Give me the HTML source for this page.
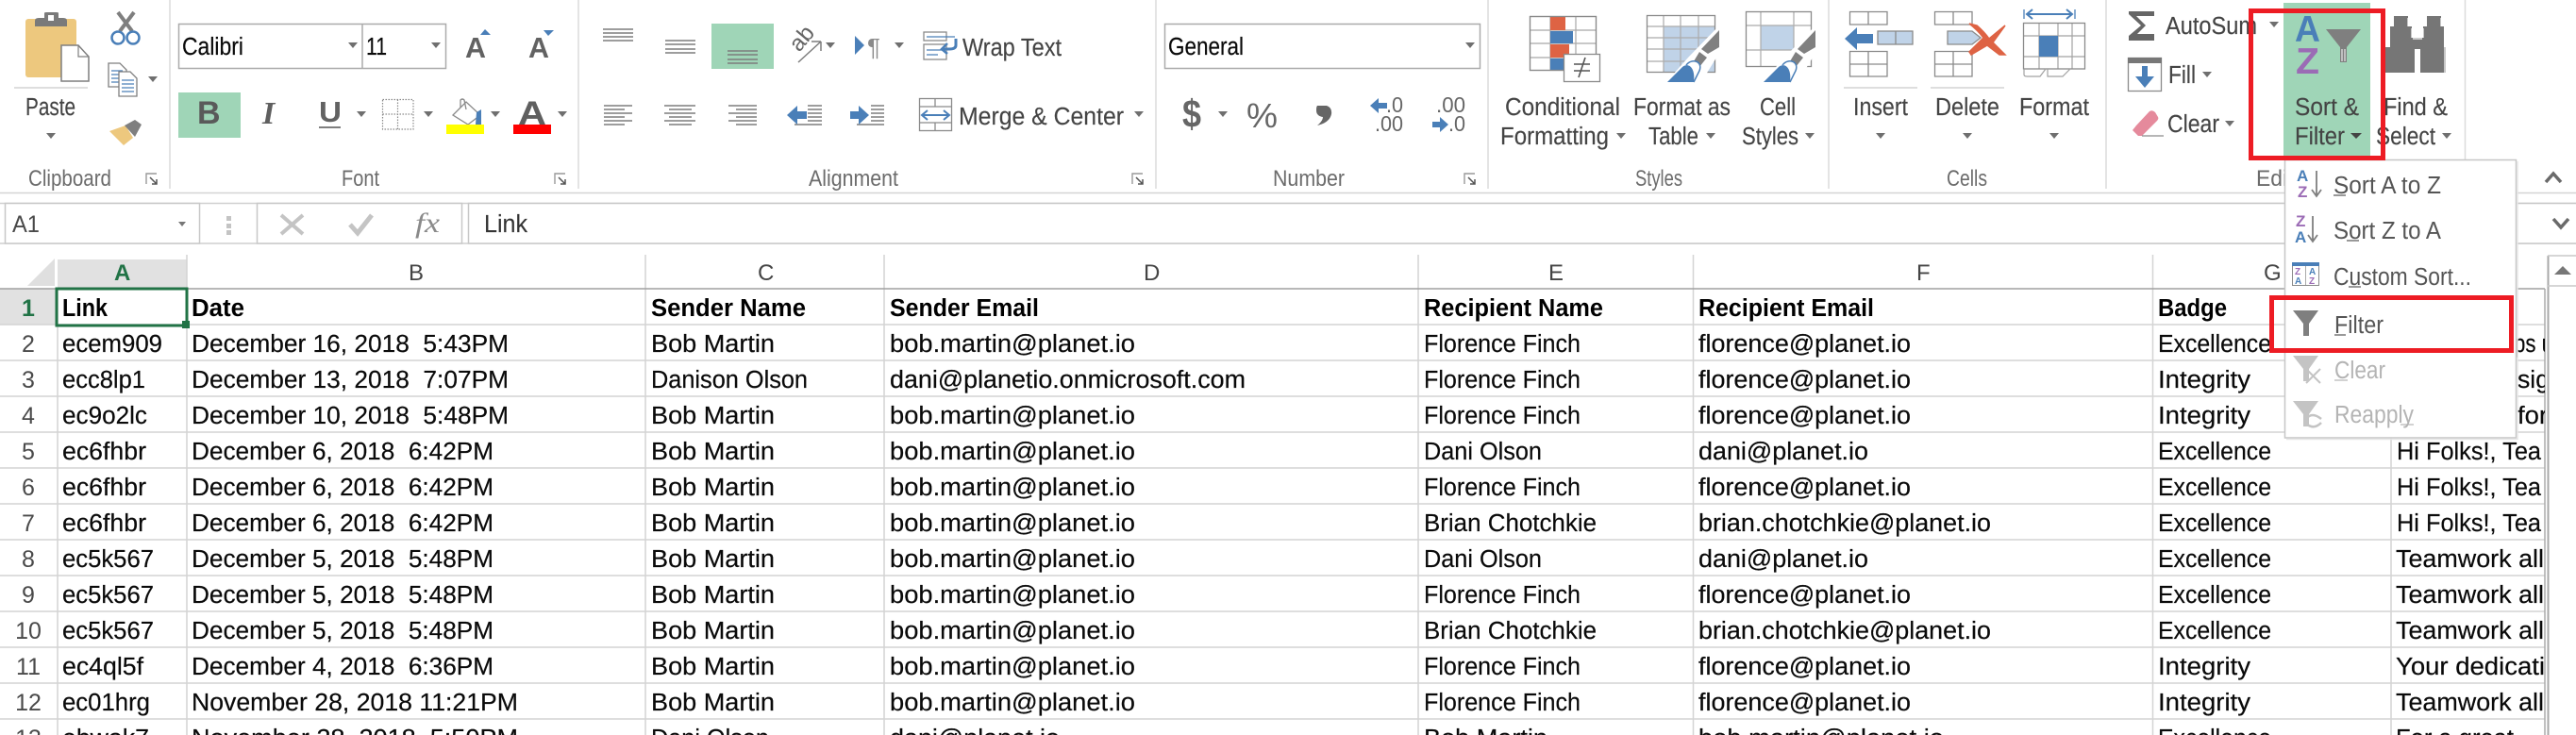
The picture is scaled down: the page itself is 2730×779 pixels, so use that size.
<!DOCTYPE html>
<html><head><meta charset="utf-8"><title>Excel</title>
<style>
html,body{margin:0;padding:0;background:#fff;width:2730px;height:779px;overflow:hidden}
svg{display:block}
text{font-family:"Liberation Sans",Arial,sans-serif;white-space:pre}
.r{font-size:25.500px;fill:#444;stroke:#444;stroke-width:.15px}
.g{font-size:24.500px;fill:#6c6c6c}
.c{font-size:25.500px;fill:#0a0a0a;stroke:#0a0a0a;stroke-width:.2px}
.b{font-size:25.500px;font-weight:bold;fill:#000}
.n{font-size:25px;fill:#4a4a4a}
.m{font-size:25.500px;fill:#555}
.d{font-size:25.500px;fill:#b4b4b4}
</style></head><body>
<svg width="2730" height="779" viewBox="0 0 2730 779" xmlns="http://www.w3.org/2000/svg">
<defs>
<path id="ar" d="M-5 -3H5L0 3Z" fill="#6f6f6f"/>
<g id="lau"><path d="M1 12V1H12" fill="none" stroke="#999" stroke-width="1.4"/><path d="M5 5L12 12M12 7V12H7" fill="none" stroke="#555" stroke-width="1.5"/></g>
<clipPath id="hc"><rect x="2535" y="306" width="162" height="473"/></clipPath>
<g id="brush">
<path d="M-1 60L22 34L57 -2V26L36 60Z" fill="#fff"/>
<path d="M55 5V23L43 30L36 25Z" fill="#808080"/>
<path d="M34 28L42 34L34 44L28 38Z" fill="#808080"/>
<path d="M20 42C26 34 38 38 34 48L28 60" fill="#fff" stroke="#4a7fb8" stroke-width="1.500"/>
<path d="M0 60L16 44C22 39 30 44 28 60Z" fill="#4a7fb8"/>
</g>
</defs>
<rect width="2730" height="779" fill="#fff"/>

<!-- separators -->
<g stroke="#dcdcdc" stroke-width="1.5"><path d="M180 0V200M613 0V200M1225 0V200M1577 0V200M1938 0V200M2232 0V200M2612.500 0V200"/></g>
<path d="M0 204.500H2730" stroke="#d4d4d4" stroke-width="1.5"/>
<path d="M0 215.500H2730M0 258H2730" stroke="#cfcfcf" stroke-width="1.5"/>

<!-- Clipboard -->
<rect x="27" y="20" width="54" height="62" rx="3" fill="#edc87e"/>
<path d="M37 28V22Q37 19 41 19H47V14Q47 13 49 13H60Q62 13 62 14V19H67Q71 19 71 22V28Z" fill="#7a7a7a"/><rect x="51" y="16" width="6" height="6" fill="#fff"/>
<path d="M65 48H83L94 60V86H65Z" fill="#fff" stroke="#7f7f7f" stroke-width="1.5"/><path d="M83 48V60H94" fill="none" stroke="#7f7f7f" stroke-width="1.2"/>
<path d="M15 93H93" stroke="#d4d4d4" stroke-width="1.5"/>
<text class="r" x="27" y="122" textLength="53" lengthAdjust="spacingAndGlyphs">Paste</text>
<use href="#ar" x="54" y="144"/>
<!-- scissors -->
<g fill="none"><path d="M125 13L140 33M142 13L127 33" stroke="#7f7f7f" stroke-width="4"/><circle cx="125" cy="40" r="6.500" stroke="#4a7fb8" stroke-width="2.500"/><circle cx="141" cy="40" r="6.500" stroke="#4a7fb8" stroke-width="2.500"/></g>
<!-- copy -->
<path d="M115 67H127L134 74V92H115Z" fill="#fff" stroke="#7f7f7f" stroke-width="1.300"/><path d="M118 75H130M118 79H130M118 83H130M118 87H130" stroke="#4a7fb8" stroke-width="1.300"/>
<path d="M126 76H138L145 83V102H126Z" fill="#fff" stroke="#7f7f7f" stroke-width="1.300"/><path d="M129 85H142M129 89H142M129 93H142M129 97H142" stroke="#4a7fb8" stroke-width="1.300"/>
<use href="#ar" x="162" y="84"/>
<!-- painter -->
<path d="M116 139L133 133L141 146L131 154Z" fill="#edc87e"/><path d="M132 133L143 127L150 132L143 145Z" fill="#7f7f7f"/>
<text class="g" x="30" y="197" textLength="88" lengthAdjust="spacingAndGlyphs">Clipboard</text>
<use href="#lau" x="154" y="183"/>

<!-- Font group -->
<rect x="189.500" y="25.500" width="283" height="47" fill="#fff" stroke="#ababab" stroke-width="1.500"/><path d="M384 25V72" stroke="#ababab" stroke-width="1.500"/>
<text class="c" x="193" y="58" textLength="65" lengthAdjust="spacingAndGlyphs">Calibri</text><use href="#ar" x="374" y="48"/>
<text class="c" x="388" y="58" textLength="22" lengthAdjust="spacingAndGlyphs">11</text><use href="#ar" x="462" y="48"/>
<text x="493" y="61" font-size="31" font-weight="bold" fill="#626262" textLength="22" lengthAdjust="spacingAndGlyphs">A</text><path d="M509 37L514 31L520 37Z" fill="#4a7fb8"/>
<text x="560" y="61" font-size="31" font-weight="bold" fill="#626262" textLength="22" lengthAdjust="spacingAndGlyphs">A</text><path d="M576 32H587L581 38Z" fill="#4a7fb8"/>
<rect x="189" y="98" width="66" height="48" fill="#9fd5b7"/>
<text x="209" y="131" font-size="34" font-weight="bold" fill="#5a5a5a">B</text>
<text x="278" y="131" font-size="34" font-style="italic" font-weight="bold" fill="#5f5f5f" style="font-family:'Liberation Serif',serif">I</text>
<text x="338" y="129" font-size="31" font-weight="bold" fill="#626262" textLength="24" lengthAdjust="spacingAndGlyphs">U</text><path d="M338 135H361" stroke="#555" stroke-width="1.500"/>
<use href="#ar" x="383" y="121"/>
<path d="M405.500 105.500H438V137H405.500ZM421.500 105.500V137M405.500 121H438" fill="none" stroke="#8a8a8a" stroke-width="1.200" stroke-dasharray="1.500 1.500"/>
<use href="#ar" x="454" y="121"/>
<path d="M480 122L494 108L509 122L496 132Z" fill="#fff" stroke="#8a8a8a" stroke-width="1.300"/><path d="M488 114V106Q490 104 492 106L494 116" fill="none" stroke="#8a8a8a" stroke-width="1.300"/><path d="M505 119L510 116V132H504Z" fill="#4a7fb8"/>
<rect x="473" y="132" width="40" height="10" fill="#ffff00"/><use href="#ar" x="525" y="121"/>
<text x="549" y="132" font-size="35" font-weight="bold" fill="#5f5f5f" textLength="30" lengthAdjust="spacingAndGlyphs">A</text>
<rect x="544" y="132" width="40" height="10" fill="#ff0000"/><use href="#ar" x="596" y="121"/>
<text class="g" x="362" y="197" textLength="40" lengthAdjust="spacingAndGlyphs">Font</text>
<use href="#lau" x="587" y="183"/>

<!-- Alignment -->
<rect x="754" y="25" width="66" height="48" fill="#9fd5b7"/>
<g stroke="#7d7d7d" stroke-width="1.500" fill="none">
<path d="M639 31H671M639 35H671M639 39H671M639 43H671"/>
<path d="M705 43H737M705 47H737M705 52H737M705 56H737"/>
<path d="M771 54H803M771 58H803M771 63H803M771 67H803"/>
<path d="M640 112H670M640 116H662M640 120H670M640 124H662M640 128H670M640 132H662"/>
<path d="M704 112H737M709 116H733M704 120H737M709 124H733M704 128H737M709 132H733"/>
<path d="M772 112H802M780 116H802M772 120H802M780 124H802M772 128H802M780 132H802"/>
<path d="M856 112H871M856 116H871M856 120H871M856 124H871M856 128H871M842 132H871"/>
<path d="M923 112H937M923 116H937M923 120H937M923 124H937M923 128H937M908 132H937"/>
<path d="M846 66L870 44M870 44H860M870 44V54"/>
</g>
<path d="M834 122L845 112V118H855V126H845V132Z" fill="#4a7fb8"/>
<path d="M921 122L910 112V118H901V126H910V132Z" fill="#4a7fb8"/>
<text x="0" y="0" font-size="24" fill="#666" transform="translate(847,56) rotate(-50)" textLength="27" lengthAdjust="spacingAndGlyphs">ab</text>
<use href="#ar" x="880" y="48"/>
<path d="M906 38L916 48L906 58Z" fill="#4a7fb8"/>
<text x="919" y="59" font-size="26" fill="#8a8a8a">¶</text>
<use href="#ar" x="953" y="48"/>
<g fill="none"><rect x="979" y="34" width="24" height="9" stroke="#8a8a8a" stroke-width="1.300"/><rect x="979" y="47" width="24" height="16" stroke="#8a8a8a" stroke-width="1.300"/><path d="M982 39H1012M982 53H1000M982 58H994" stroke="#4a7fb8" stroke-width="1.300"/><path d="M1013 41V48Q1013 52 1006 52H998" stroke="#4a7fb8" stroke-width="3"/><path d="M1004 46L998 52L1004 57" stroke="#4a7fb8" stroke-width="2.500"/></g>
<text class="r" x="1020" y="59" textLength="105" lengthAdjust="spacingAndGlyphs">Wrap Text</text>
<g fill="none"><rect x="974.500" y="104.500" width="34" height="34" stroke="#8a8a8a" stroke-width="1.300"/><path d="M974 113H1009M974 130H1009M991 104V113M991 130V139" stroke="#8a8a8a" stroke-width="1.300"/><path d="M978 122H1005M983 117L977 122L983 127M1000 117L1006 122L1000 127" stroke="#4a7fb8" stroke-width="2"/></g>
<text class="r" x="1016" y="132" textLength="175" lengthAdjust="spacingAndGlyphs">Merge &amp; Center</text>
<use href="#ar" x="1207" y="121"/>
<text class="g" x="857" y="197" textLength="95" lengthAdjust="spacingAndGlyphs">Alignment</text>
<use href="#lau" x="1199" y="183"/>

<!-- Number -->
<rect x="1234.500" y="25.500" width="334" height="47" fill="#fff" stroke="#ababab" stroke-width="1.500"/>
<text class="c" x="1238" y="58" textLength="80" lengthAdjust="spacingAndGlyphs">General</text><use href="#ar" x="1558" y="48"/>
<text x="1253" y="135" font-size="42" font-weight="bold" fill="#666" textLength="20" lengthAdjust="spacingAndGlyphs">$</text><use href="#ar" x="1296" y="121"/>
<text x="1321" y="135" font-size="36" fill="#666" textLength="33" lengthAdjust="spacingAndGlyphs">%</text>
<path d="M1396 112H1406Q1412 114 1411 121Q1409 130 1396 133Q1402 128 1402 124Q1395 123 1395 117Q1395 113 1396 112Z" fill="#666"/>
<path d="M1452 112L1461 104V109H1470V115H1461V120Z" fill="#4a7fb8"/>
<text x="1469" y="119" font-size="23" fill="#666" textLength="18" lengthAdjust="spacingAndGlyphs">.0</text>
<text x="1457" y="139" font-size="23" fill="#666" textLength="30" lengthAdjust="spacingAndGlyphs">.00</text>
<text x="1522" y="119" font-size="23" fill="#666" textLength="31" lengthAdjust="spacingAndGlyphs">.00</text>
<path d="M1535 132L1526 124V129H1518V135H1526V140Z" fill="#4a7fb8"/>
<text x="1535" y="139" font-size="23" fill="#666" textLength="18" lengthAdjust="spacingAndGlyphs">.0</text>
<text class="g" x="1349" y="197" textLength="76" lengthAdjust="spacingAndGlyphs">Number</text>
<use href="#lau" x="1551" y="183"/>

<!-- Styles: conditional -->
<g fill="none" stroke="#a8a8a8" stroke-width="1.200"><rect x="1621.500" y="17.500" width="70" height="57"/><path d="M1643 17V75M1670 17V75M1621 32H1691M1621 46H1691M1621 61H1691"/></g>
<rect x="1643" y="18" width="16" height="14" fill="#de6344"/><rect x="1643" y="33" width="24" height="13" fill="#4a7fb8"/><rect x="1643" y="47" width="20" height="14" fill="#de6344"/><rect x="1643" y="62" width="14" height="13" fill="#4a7fb8"/>
<rect x="1621.500" y="17.500" width="70" height="57" fill="none" stroke="#8a8a8a" stroke-width="1.300"/>
<rect x="1657.500" y="57.500" width="38" height="29" fill="#fff" stroke="#8a8a8a" stroke-width="1.300"/>
<path d="M1668 68H1685M1668 75H1685M1680 61L1673 82" stroke="#555" stroke-width="1.600" fill="none"/>
<text class="r" x="1595" y="122" textLength="122" lengthAdjust="spacingAndGlyphs">Conditional</text>
<text class="r" x="1590" y="153" textLength="115" lengthAdjust="spacingAndGlyphs">Formatting</text><use href="#ar" x="1718" y="144"/>
<!-- format as table -->
<rect x="1763" y="28" width="55" height="49" fill="#c0d3e8"/>
<g fill="none" stroke="#ababab" stroke-width="1.200"><path d="M1745 28H1818M1745 40H1818M1745 52H1818M1745 65H1818M1763 16V77M1781 16V77M1800 16V77"/></g>
<rect x="1745.500" y="16.500" width="72" height="60" fill="none" stroke="#8a8a8a" stroke-width="1.300"/>
<use href="#brush" x="1767" y="27"/>
<text class="r" x="1731" y="122" textLength="103" lengthAdjust="spacingAndGlyphs">Format as</text>
<text class="r" x="1747" y="153" textLength="53" lengthAdjust="spacingAndGlyphs">Table</text><use href="#ar" x="1813" y="144"/>
<!-- cell styles -->
<rect x="1866" y="27" width="35" height="26" fill="#c0d3e8"/>
<g fill="none" stroke="#ababab" stroke-width="1.200"><path d="M1850 27H1919M1850 53H1919M1866 12V71M1901 12V71"/></g>
<rect x="1850.500" y="12.500" width="69" height="58" fill="none" stroke="#8a8a8a" stroke-width="1.300"/>
<use href="#brush" x="1869" y="27"/>
<text class="r" x="1865" y="122" textLength="38" lengthAdjust="spacingAndGlyphs">Cell</text>
<text class="r" x="1846" y="153" textLength="60" lengthAdjust="spacingAndGlyphs">Styles</text><use href="#ar" x="1918" y="144"/>
<text class="g" x="1733" y="197" textLength="50" lengthAdjust="spacingAndGlyphs">Styles</text>

<!-- Cells: insert -->
<g fill="none" stroke="#8a8a8a" stroke-width="1.300">
<path d="M1960.500 12.500H2000V26H1960.500ZM1980 12V26"/><path d="M1960.500 54.500H2000V81H1960.500ZM1980 54V81M1960 68H2000"/>
<rect x="1990" y="33" width="37" height="14" fill="#c0d3e8"/><path d="M2009 33V47"/>
<path d="M2050.500 12.500H2090V26H2050.500ZM2070 12V26"/><path d="M2050.500 54.500H2090V81H2050.500ZM2070 54V81M2050 68H2090"/>
<path d="M2064 33H2090L2099 40L2090 47H2064Z" fill="#c0d3e8"/>
</g>
<path d="M1955 41L1968 29V36H1985V46H1968V53Z" fill="#4a7fb8"/>
<path d="M2087 25L2095 27Q2103 34 2108 41L2125 27L2112 45L2125 58L2119 58L2106 48L2089 58L2087 55L2102 40Q2096 32 2087 25Z" fill="#de6344" stroke="#de6344" stroke-width="1.500"/>
<path d="M1954 93H2032M2046 93H2124" stroke="#d4d4d4" stroke-width="1.500"/>
<text class="r" x="1964" y="122" textLength="58" lengthAdjust="spacingAndGlyphs">Insert</text><use href="#ar" x="1993" y="144"/>
<text class="r" x="2051" y="122" textLength="68" lengthAdjust="spacingAndGlyphs">Delete</text><use href="#ar" x="2085" y="144"/>
<!-- format -->
<path d="M2145 10V20M2199 10V20" stroke="#4a7fb8" stroke-width="1.300"/><path d="M2148 15H2196M2154 10L2148 15L2154 20M2190 10L2196 15L2190 20" fill="none" stroke="#4a7fb8" stroke-width="2"/>
<g fill="none" stroke="#a2a2a2" stroke-width="1.200"><path d="M2144 38H2210M2144 60H2210M2161 24V73M2181 24V73M2196 24V73"/></g>
<rect x="2161" y="38" width="20" height="22" fill="#4a7fb8"/>
<rect x="2144.500" y="24.500" width="65" height="48.500" fill="none" stroke="#8a8a8a" stroke-width="1.300"/>
<path d="M2145 73V79Q2145 81 2148 81H2162L2168 73M2170 73V81H2186L2194 73" fill="none" stroke="#a2a2a2" stroke-width="1.200"/>
<text class="r" x="2140" y="122" textLength="74" lengthAdjust="spacingAndGlyphs">Format</text><use href="#ar" x="2177" y="144"/>
<text class="g" x="2063" y="197" textLength="43" lengthAdjust="spacingAndGlyphs">Cells</text>

<!-- Editing -->
<path d="M2283 18V12H2256V15L2269 27L2256 38V43H2283V36H2265L2274 27L2264 17H2283Z" fill="#666"/>
<text class="r" x="2295" y="36" textLength="97" lengthAdjust="spacingAndGlyphs">AutoSum</text><use href="#ar" x="2410" y="26"/>
<rect x="2255.500" y="61.500" width="35" height="35" fill="#fff" stroke="#8a8a8a" stroke-width="1.300"/><rect x="2255" y="61" width="36" height="6" fill="#777"/>
<path d="M2270 70H2276V81H2283L2273 93L2263 81H2270Z" fill="#4a7fb8"/>
<text class="r" x="2298" y="88" textLength="29" lengthAdjust="spacingAndGlyphs">Fill</text><use href="#ar" x="2339" y="79"/>
<path d="M2264 133L2278 118Q2281 116 2284 119L2287 124Q2288 126 2286 128L2270 144H2266L2260 138Z" fill="#e58a9c"/><path d="M2270 144H2293" stroke="#8a8a8a" stroke-width="1.200"/>
<text class="r" x="2297" y="140" textLength="55" lengthAdjust="spacingAndGlyphs">Clear</text><use href="#ar" x="2363" y="131"/>
<text class="g" x="2391" y="197" textLength="70" lengthAdjust="spacingAndGlyphs">Editing</text>

<!-- Sort & Filter green -->
<rect x="2420" y="3" width="92" height="162" fill="#9fd5b7"/>
<text x="2432" y="44" font-size="39" fill="#4a7fb8" font-weight="bold" textLength="27" lengthAdjust="spacingAndGlyphs">A</text>
<text x="2433" y="78" font-size="39" fill="#9b6bb5" font-weight="bold" textLength="25" lengthAdjust="spacingAndGlyphs">Z</text>
<path d="M2465 31H2502L2487 50V66H2480V50Z" fill="#7f7f7f"/><path d="M2482 52V65M2485 52V65" stroke="#fff" stroke-width="1"/>
<text class="r" x="2432" y="122" textLength="68" lengthAdjust="spacingAndGlyphs">Sort &amp;</text>
<text class="r" x="2432" y="153" textLength="53" lengthAdjust="spacingAndGlyphs">Filter</text>
<path d="M2491 141H2503L2497 147Z" fill="#444"/>
<!-- binoculars -->
<path d="M2537 17H2552V28H2556V40H2568V28H2572V17H2587V28H2590V50H2592V77H2565V52H2559V77H2528V50H2533V28H2537Z" fill="#767676"/>
<path d="M2557 41H2567M2556 30V40M2568 30V40M2591 50V77M2552 19V28M2587 19V28" stroke="#fff" stroke-width="1.200" fill="none"/>
<text class="r" x="2526" y="122" textLength="68" lengthAdjust="spacingAndGlyphs">Find &amp;</text>
<text class="r" x="2518" y="153" textLength="63" lengthAdjust="spacingAndGlyphs">Select</text><use href="#ar" x="2593" y="144"/>

<!-- collapse chevron -->
<path d="M2698 193L2706 184L2714 193" fill="none" stroke="#6a6a6a" stroke-width="3.500"/>

<!-- Formula bar -->
<rect x="5.500" y="215.500" width="206" height="42.500" fill="#fff" stroke="#c8c8c8" stroke-width="1.500"/>
<text class="n" x="13" y="246" textLength="29" lengthAdjust="spacingAndGlyphs" fill="#333">A1</text>
<path d="M189 235H197L193 240Z" fill="#777"/>
<rect x="240" y="229" width="5" height="5" fill="#c4c4c4"/><rect x="240" y="237" width="5" height="5" fill="#c4c4c4"/><rect x="240" y="244" width="5" height="5" fill="#c4c4c4"/>
<rect x="272.500" y="215.500" width="217" height="42.500" fill="#fff" stroke="#c8c8c8" stroke-width="1.500"/>
<rect x="496.500" y="215.500" width="2240" height="42.500" fill="#fff" stroke="#c8c8c8" stroke-width="1.500"/>
<path d="M298 228L321 248M321 228L298 248" stroke="#c4c4c4" stroke-width="4"/>
<path d="M371 238L379 247L394 228" fill="none" stroke="#c4c4c4" stroke-width="5"/>
<text x="440" y="246" font-size="30" font-style="italic" fill="#8a8a8a" style="font-family:'Liberation Serif',serif" textLength="26" lengthAdjust="spacingAndGlyphs">fx</text>
<text class="r" x="513" y="246" textLength="46" lengthAdjust="spacingAndGlyphs" style="fill:#333">Link</text>
<path d="M2706 232L2714 241L2722 232" fill="none" stroke="#6a6a6a" stroke-width="3.500"/>

<!-- Sheet -->
<rect x="61" y="275" width="137" height="31" fill="#e1e1e1"/>
<rect x="0" y="306" width="60" height="38" fill="#e1e1e1"/>
<path d="M58 274V303H29Z" fill="#dfdfdf"/>
<g stroke="#d4d4d4" stroke-width="1.5">
<path d="M198 270V779M684 270V779M937 270V779M1503 270V779M1794.500 270V779M2281.500 270V779M2534 344V779M61 306V779"/>
<path d="M0 344H2697M0 382H2697M0 420H2697M0 458H2697M0 496H2697M0 534H2697M0 572H2697M0 610H2697M0 648H2697M0 686H2697M0 724H2697M0 762H2697"/>
</g>
<path d="M0 306H2697" stroke="#a0a0a0" stroke-width="1.500"/>
<path d="M2697 306V779" stroke="#ababab" stroke-width="1.500"/>
<path d="M2700.500 271V779" stroke="#a8a8a8" stroke-width="2"/>
<path d="M2700 271H2730M2700 303H2730" stroke="#c8c8c8" stroke-width="1.500"/>
<path d="M2707 291L2716 282L2725 291Z" fill="#777"/>

<!-- col headers -->
<g font-size="24" fill="#444">
<text x="121" y="297" font-weight="bold" fill="#217346" style="fill:#217346">A</text>
<text x="433" y="297">B</text><text x="803" y="297">C</text><text x="1212" y="297">D</text><text x="1641" y="297">E</text><text x="2031" y="297">F</text><text x="2399" y="297">G</text>
</g>
<!-- row numbers -->
<g font-size="25" fill="#4a4a4a" text-anchor="middle">
<text x="30" y="335" font-weight="bold" style="fill:#217346">1</text>
<text x="30" y="373">2</text><text x="30" y="411">3</text><text x="30" y="449">4</text><text x="30" y="487">5</text><text x="30" y="525">6</text><text x="30" y="563">7</text><text x="30" y="601">8</text><text x="30" y="639">9</text><text x="30" y="677">10</text><text x="30" y="715">11</text><text x="30" y="753">12</text><text x="30" y="791">13</text>
</g>
<!-- header row -->
<text class="b" x="66" y="335" textLength="48" lengthAdjust="spacingAndGlyphs">Link</text>
<text class="b" x="203" y="335" textLength="56" lengthAdjust="spacingAndGlyphs">Date</text>
<text class="b" x="690" y="335" textLength="164" lengthAdjust="spacingAndGlyphs">Sender Name</text>
<text class="b" x="943" y="335" textLength="158" lengthAdjust="spacingAndGlyphs">Sender Email</text>
<text class="b" x="1509" y="335" textLength="190" lengthAdjust="spacingAndGlyphs">Recipient Name</text>
<text class="b" x="1800" y="335" textLength="186" lengthAdjust="spacingAndGlyphs">Recipient Email</text>
<text class="b" x="2287" y="335" textLength="73" lengthAdjust="spacingAndGlyphs">Badge</text>
<!-- col A -->
<text class="c" x="66" y="373" textLength="106" lengthAdjust="spacingAndGlyphs">ecem909</text>
<text class="c" x="66" y="411" textLength="88" lengthAdjust="spacingAndGlyphs">ecc8lp1</text>
<text class="c" x="66" y="449" textLength="90" lengthAdjust="spacingAndGlyphs">ec9o2lc</text>
<text class="c" x="66" y="487" textLength="89" lengthAdjust="spacingAndGlyphs">ec6fhbr</text>
<text class="c" x="66" y="525" textLength="89" lengthAdjust="spacingAndGlyphs">ec6fhbr</text>
<text class="c" x="66" y="563" textLength="89" lengthAdjust="spacingAndGlyphs">ec6fhbr</text>
<text class="c" x="66" y="601" textLength="97" lengthAdjust="spacingAndGlyphs">ec5k567</text>
<text class="c" x="66" y="639" textLength="97" lengthAdjust="spacingAndGlyphs">ec5k567</text>
<text class="c" x="66" y="677" textLength="97" lengthAdjust="spacingAndGlyphs">ec5k567</text>
<text class="c" x="66" y="715" textLength="86" lengthAdjust="spacingAndGlyphs">ec4ql5f</text>
<text class="c" x="66" y="753" textLength="93" lengthAdjust="spacingAndGlyphs">ec01hrg</text>
<text class="c" x="66" y="791" textLength="92" lengthAdjust="spacingAndGlyphs">ebwak7</text>
<!-- col B -->
<text class="c" x="203" y="373" textLength="336" lengthAdjust="spacingAndGlyphs">December 16, 2018  5:43PM</text>
<text class="c" x="203" y="411" textLength="336" lengthAdjust="spacingAndGlyphs">December 13, 2018  7:07PM</text>
<text class="c" x="203" y="449" textLength="336" lengthAdjust="spacingAndGlyphs">December 10, 2018  5:48PM</text>
<text class="c" x="203" y="487" textLength="320" lengthAdjust="spacingAndGlyphs">December 6, 2018  6:42PM</text>
<text class="c" x="203" y="525" textLength="320" lengthAdjust="spacingAndGlyphs">December 6, 2018  6:42PM</text>
<text class="c" x="203" y="563" textLength="320" lengthAdjust="spacingAndGlyphs">December 6, 2018  6:42PM</text>
<text class="c" x="203" y="601" textLength="320" lengthAdjust="spacingAndGlyphs">December 5, 2018  5:48PM</text>
<text class="c" x="203" y="639" textLength="320" lengthAdjust="spacingAndGlyphs">December 5, 2018  5:48PM</text>
<text class="c" x="203" y="677" textLength="320" lengthAdjust="spacingAndGlyphs">December 5, 2018  5:48PM</text>
<text class="c" x="203" y="715" textLength="320" lengthAdjust="spacingAndGlyphs">December 4, 2018  6:36PM</text>
<text class="c" x="203" y="753" textLength="346" lengthAdjust="spacingAndGlyphs">November 28, 2018 11:21PM</text>
<text class="c" x="203" y="791" textLength="346" lengthAdjust="spacingAndGlyphs">November 28, 2018  5:50PM</text>
<!-- col C -->
<text class="c" x="690" y="373" textLength="131" lengthAdjust="spacingAndGlyphs">Bob Martin</text>
<text class="c" x="690" y="411" textLength="166" lengthAdjust="spacingAndGlyphs">Danison Olson</text>
<text class="c" x="690" y="449" textLength="131" lengthAdjust="spacingAndGlyphs">Bob Martin</text>
<text class="c" x="690" y="487" textLength="131" lengthAdjust="spacingAndGlyphs">Bob Martin</text>
<text class="c" x="690" y="525" textLength="131" lengthAdjust="spacingAndGlyphs">Bob Martin</text>
<text class="c" x="690" y="563" textLength="131" lengthAdjust="spacingAndGlyphs">Bob Martin</text>
<text class="c" x="690" y="601" textLength="131" lengthAdjust="spacingAndGlyphs">Bob Martin</text>
<text class="c" x="690" y="639" textLength="131" lengthAdjust="spacingAndGlyphs">Bob Martin</text>
<text class="c" x="690" y="677" textLength="131" lengthAdjust="spacingAndGlyphs">Bob Martin</text>
<text class="c" x="690" y="715" textLength="131" lengthAdjust="spacingAndGlyphs">Bob Martin</text>
<text class="c" x="690" y="753" textLength="131" lengthAdjust="spacingAndGlyphs">Bob Martin</text>
<text class="c" x="690" y="791" textLength="125" lengthAdjust="spacingAndGlyphs">Dani Olson</text>
<!-- col D -->
<text class="c" x="943" y="373" textLength="260" lengthAdjust="spacingAndGlyphs">bob.martin@planet.io</text>
<text class="c" x="943" y="411" textLength="377" lengthAdjust="spacingAndGlyphs">dani@planetio.onmicrosoft.com</text>
<text class="c" x="943" y="449" textLength="260" lengthAdjust="spacingAndGlyphs">bob.martin@planet.io</text>
<text class="c" x="943" y="487" textLength="260" lengthAdjust="spacingAndGlyphs">bob.martin@planet.io</text>
<text class="c" x="943" y="525" textLength="260" lengthAdjust="spacingAndGlyphs">bob.martin@planet.io</text>
<text class="c" x="943" y="563" textLength="260" lengthAdjust="spacingAndGlyphs">bob.martin@planet.io</text>
<text class="c" x="943" y="601" textLength="260" lengthAdjust="spacingAndGlyphs">bob.martin@planet.io</text>
<text class="c" x="943" y="639" textLength="260" lengthAdjust="spacingAndGlyphs">bob.martin@planet.io</text>
<text class="c" x="943" y="677" textLength="260" lengthAdjust="spacingAndGlyphs">bob.martin@planet.io</text>
<text class="c" x="943" y="715" textLength="260" lengthAdjust="spacingAndGlyphs">bob.martin@planet.io</text>
<text class="c" x="943" y="753" textLength="260" lengthAdjust="spacingAndGlyphs">bob.martin@planet.io</text>
<text class="c" x="943" y="791" textLength="180" lengthAdjust="spacingAndGlyphs">dani@planet.io</text>
<!-- col E -->
<text class="c" x="1509" y="373" textLength="166" lengthAdjust="spacingAndGlyphs">Florence Finch</text>
<text class="c" x="1509" y="411" textLength="166" lengthAdjust="spacingAndGlyphs">Florence Finch</text>
<text class="c" x="1509" y="449" textLength="166" lengthAdjust="spacingAndGlyphs">Florence Finch</text>
<text class="c" x="1509" y="487" textLength="125" lengthAdjust="spacingAndGlyphs">Dani Olson</text>
<text class="c" x="1509" y="525" textLength="166" lengthAdjust="spacingAndGlyphs">Florence Finch</text>
<text class="c" x="1509" y="563" textLength="183" lengthAdjust="spacingAndGlyphs">Brian Chotchkie</text>
<text class="c" x="1509" y="601" textLength="125" lengthAdjust="spacingAndGlyphs">Dani Olson</text>
<text class="c" x="1509" y="639" textLength="166" lengthAdjust="spacingAndGlyphs">Florence Finch</text>
<text class="c" x="1509" y="677" textLength="183" lengthAdjust="spacingAndGlyphs">Brian Chotchkie</text>
<text class="c" x="1509" y="715" textLength="166" lengthAdjust="spacingAndGlyphs">Florence Finch</text>
<text class="c" x="1509" y="753" textLength="166" lengthAdjust="spacingAndGlyphs">Florence Finch</text>
<text class="c" x="1509" y="791" textLength="131" lengthAdjust="spacingAndGlyphs">Bob Martin</text>
<!-- col F -->
<text class="c" x="1800" y="373" textLength="225" lengthAdjust="spacingAndGlyphs">florence@planet.io</text>
<text class="c" x="1800" y="411" textLength="225" lengthAdjust="spacingAndGlyphs">florence@planet.io</text>
<text class="c" x="1800" y="449" textLength="225" lengthAdjust="spacingAndGlyphs">florence@planet.io</text>
<text class="c" x="1800" y="487" textLength="180" lengthAdjust="spacingAndGlyphs">dani@planet.io</text>
<text class="c" x="1800" y="525" textLength="225" lengthAdjust="spacingAndGlyphs">florence@planet.io</text>
<text class="c" x="1800" y="563" textLength="310" lengthAdjust="spacingAndGlyphs">brian.chotchkie@planet.io</text>
<text class="c" x="1800" y="601" textLength="180" lengthAdjust="spacingAndGlyphs">dani@planet.io</text>
<text class="c" x="1800" y="639" textLength="225" lengthAdjust="spacingAndGlyphs">florence@planet.io</text>
<text class="c" x="1800" y="677" textLength="310" lengthAdjust="spacingAndGlyphs">brian.chotchkie@planet.io</text>
<text class="c" x="1800" y="715" textLength="225" lengthAdjust="spacingAndGlyphs">florence@planet.io</text>
<text class="c" x="1800" y="753" textLength="225" lengthAdjust="spacingAndGlyphs">florence@planet.io</text>
<text class="c" x="1800" y="791" textLength="260" lengthAdjust="spacingAndGlyphs">bob.martin@planet.io</text>
<!-- col G -->
<text class="c" x="2287" y="373" textLength="120" lengthAdjust="spacingAndGlyphs">Excellence</text>
<text class="c" x="2287" y="411" textLength="98" lengthAdjust="spacingAndGlyphs">Integrity</text>
<text class="c" x="2287" y="449" textLength="98" lengthAdjust="spacingAndGlyphs">Integrity</text>
<text class="c" x="2287" y="487" textLength="120" lengthAdjust="spacingAndGlyphs">Excellence</text>
<text class="c" x="2287" y="525" textLength="120" lengthAdjust="spacingAndGlyphs">Excellence</text>
<text class="c" x="2287" y="563" textLength="120" lengthAdjust="spacingAndGlyphs">Excellence</text>
<text class="c" x="2287" y="601" textLength="120" lengthAdjust="spacingAndGlyphs">Excellence</text>
<text class="c" x="2287" y="639" textLength="120" lengthAdjust="spacingAndGlyphs">Excellence</text>
<text class="c" x="2287" y="677" textLength="120" lengthAdjust="spacingAndGlyphs">Excellence</text>
<text class="c" x="2287" y="715" textLength="98" lengthAdjust="spacingAndGlyphs">Integrity</text>
<text class="c" x="2287" y="753" textLength="98" lengthAdjust="spacingAndGlyphs">Integrity</text>
<text class="c" x="2287" y="791" textLength="120" lengthAdjust="spacingAndGlyphs">Excellence</text>
<!-- col H -->
<g clip-path="url(#hc)">
<text class="c" x="2664" y="373" textLength="42" lengthAdjust="spacingAndGlyphs">ps u</text>
<text class="c" x="2668" y="411" textLength="34" lengthAdjust="spacingAndGlyphs">sig</text>
<text class="c" x="2668" y="449" textLength="32" lengthAdjust="spacingAndGlyphs">for</text>
<text class="c" x="2540" y="487" textLength="153" lengthAdjust="spacingAndGlyphs">Hi Folks!, Tea</text>
<text class="c" x="2540" y="525" textLength="153" lengthAdjust="spacingAndGlyphs">Hi Folks!, Tea</text>
<text class="c" x="2540" y="563" textLength="153" lengthAdjust="spacingAndGlyphs">Hi Folks!, Tea</text>
<text class="c" x="2539" y="601" textLength="157" lengthAdjust="spacingAndGlyphs">Teamwork all</text>
<text class="c" x="2539" y="639" textLength="157" lengthAdjust="spacingAndGlyphs">Teamwork all</text>
<text class="c" x="2539" y="677" textLength="157" lengthAdjust="spacingAndGlyphs">Teamwork all</text>
<text class="c" x="2539" y="715" textLength="158" lengthAdjust="spacingAndGlyphs">Your dedicati</text>
<text class="c" x="2539" y="753" textLength="157" lengthAdjust="spacingAndGlyphs">Teamwork all</text>
<text class="c" x="2539" y="791" textLength="125" lengthAdjust="spacingAndGlyphs">For a great</text>
</g>
<!-- selection -->
<rect x="60" y="306" width="138" height="39" fill="none" stroke="#217346" stroke-width="3"/>
<rect x="193" y="340" width="8" height="8" fill="#217346"/>

<!-- Dropdown menu -->
<rect x="2421.500" y="169.500" width="245" height="294.500" fill="#fff" stroke="#c6c6c6" stroke-width="1.500"/>
<path d="M2423 465.500H2668V171" fill="none" stroke="#e6e6e6" stroke-width="1.500"/>
<!-- Sort A-Z -->
<text x="2434" y="192" font-size="17" font-weight="bold" fill="#4a7fb8">A</text>
<text x="2435" y="209" font-size="17" font-weight="bold" fill="#9b6bb5">Z</text>
<path d="M2455 181V207M2450 201L2455 208L2460 201" fill="none" stroke="#7f7f7f" stroke-width="1.800"/>
<text class="m" x="2473" y="205" textLength="114" lengthAdjust="spacingAndGlyphs">Sort A to Z</text><path d="M2473 207H2486" stroke="#555" stroke-width="1.200"/>
<!-- Sort Z-A -->
<text x="2433" y="240" font-size="17" font-weight="bold" fill="#9b6bb5">Z</text>
<text x="2432" y="257" font-size="17" font-weight="bold" fill="#4a7fb8">A</text>
<path d="M2451 229V255M2446 249L2451 256L2456 249" fill="none" stroke="#7f7f7f" stroke-width="1.800"/>
<text class="m" x="2473" y="253" textLength="114" lengthAdjust="spacingAndGlyphs">Sort Z to A</text><path d="M2487 255H2500" stroke="#555" stroke-width="1.200"/>
<!-- Custom sort -->
<rect x="2429.500" y="279.500" width="28" height="23" fill="#fff" stroke="#8a8a8a" stroke-width="1"/><rect x="2429" y="278" width="29" height="4" fill="#4a7fb8"/><path d="M2443.500 282V302" stroke="#aaa"/>
<text x="2432" y="291" font-size="10" font-weight="bold" fill="#9b6bb5">Z</text><text x="2432" y="301" font-size="10" font-weight="bold" fill="#4a7fb8">A</text>
<text x="2447" y="291" font-size="10" font-weight="bold" fill="#4a7fb8">A</text><text x="2447" y="301" font-size="10" font-weight="bold" fill="#9b6bb5">Z</text>
<text class="m" x="2473" y="302" textLength="146" lengthAdjust="spacingAndGlyphs">Custom Sort...</text><path d="M2489 304H2502" stroke="#555" stroke-width="1.200"/>
<!-- Filter -->
<path d="M2430 329H2457L2447 343V356H2441V343Z" fill="#7f7f7f"/>
<text class="m" x="2474" y="353" textLength="52" lengthAdjust="spacingAndGlyphs">Filter</text><path d="M2474 355H2486" stroke="#555" stroke-width="1.200"/>
<!-- Clear -->
<path d="M2430 377H2457L2447 391V404H2441V391Z" fill="#c4c4c4"/><path d="M2444 391L2459 406M2459 391L2444 406" stroke="#c4c4c4" stroke-width="2"/>
<text class="d" x="2474" y="401" textLength="54" lengthAdjust="spacingAndGlyphs">Clear</text><path d="M2474 403H2488" stroke="#b4b4b4" stroke-width="1.200"/>
<!-- Reapply -->
<path d="M2430 425H2457L2447 439V452H2441V439Z" fill="#c4c4c4"/><path d="M2444 444Q2450 436 2460 444M2460 448Q2452 456 2444 449" fill="none" stroke="#c4c4c4" stroke-width="2.500"/>
<text class="d" x="2474" y="448" textLength="84" lengthAdjust="spacingAndGlyphs">Reapply</text><path d="M2544 450H2558" stroke="#b4b4b4" stroke-width="1.200"/>

<!-- Red annotation boxes -->
<rect x="2385.500" y="11.500" width="140" height="156" fill="none" stroke="#ed1c24" stroke-width="5"/>
<rect x="2407.500" y="315.500" width="254" height="56" fill="none" stroke="#ed1c24" stroke-width="5"/>
</svg>
</body></html>
